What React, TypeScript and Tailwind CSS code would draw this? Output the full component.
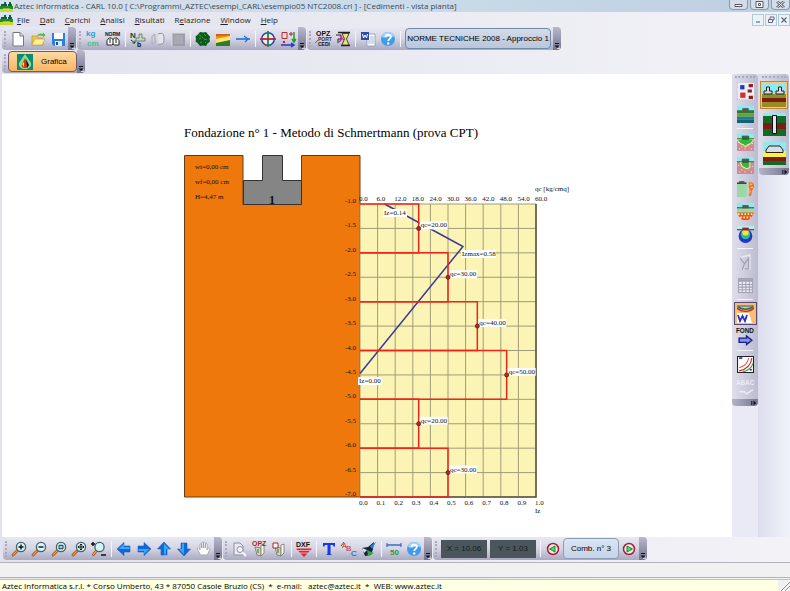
import type { ReactNode } from 'react';
import clsx from 'clsx';

// ---------- Toolbar building blocks ----------

function Icon({ children, size = 16 }: { children: ReactNode; size?: number }) {
  return (
    <svg width={size} height={size} viewBox="0 0 16 16" fill="none" className="overflow-visible" aria-hidden="true">
      {children}
    </svg>
  );
}

function ToolButton({ label, children, disabled }: { label: string; children: ReactNode; disabled?: boolean }) {
  return (
    <button type="button" aria-label={label} disabled={disabled} className="flex w-5 shrink-0 items-center justify-center">
      {children}
    </button>
  );
}

function SideButton({ label, children, selected }: { label: string; children: ReactNode; selected?: boolean }) {
  return (
    <button
      type="button"
      aria-label={label}
      className={clsx(
        'flex h-[23px] w-[23px] shrink-0 items-center justify-center',
        selected && 'border border-[#5a4a70] bg-[#f9bd74]'
      )}
    >
      {children}
    </button>
  );
}

function LayerButton({ label, children, selected }: { label: string; children: ReactNode; selected?: boolean }) {
  return (
    <button
      type="button"
      aria-label={label}
      className={clsx(
        'flex h-7 w-7 shrink-0 items-center justify-center',
        selected && 'border border-[#c8862c] bg-[#fbc67a]'
      )}
    >
      {children}
    </button>
  );
}

function Grip() {
  return (
    <div className="flex w-[6px] shrink-0 items-center justify-center">
      <div className="h-4 w-0 border-l-2 border-dotted border-[#a9a9bd]" />
    </div>
  );
}

function Divider() {
  return (
    <div className="flex w-[5px] shrink-0 items-center justify-center">
      <div className="h-4 w-px bg-[#f4f4fa]" />
    </div>
  );
}

function SideGrip() {
  return (
    <div className="flex h-[6px] w-full items-center justify-center">
      <div className="h-0 w-4/5 border-t-2 border-dotted border-[#a9a9bd]" />
    </div>
  );
}

function SideDivider() {
  return (
    <div className="flex h-[5px] items-center justify-center">
      <div className="h-px w-4 bg-[#f4f4fa]" />
    </div>
  );
}

function Overflow() {
  return (
    <button
      type="button"
      aria-label="Opzioni barra"
      className="flex w-2 shrink-0 items-end justify-center rounded-r-sm bg-gradient-to-b from-[#b9b9cc] to-[#74748f] pb-px"
    >
      <svg width="6" height="6" viewBox="0 0 6 6" aria-hidden="true">
        <path d="M1 .5h4" stroke="#111" />
        <path d="M.5 2.5h5L3 5z" fill="#111" />
        <path d="M3 5.5h3v-3" stroke="#fff" strokeWidth=".7" fill="none" />
      </svg>
    </button>
  );
}

function SideOverflow() {
  return (
    <button
      type="button"
      aria-label="Opzioni barra"
      className="flex h-[7px] w-full shrink-0 items-center justify-end rounded-b-sm bg-gradient-to-r from-[#b4b4c8] to-[#74748f] pr-px"
    >
      <svg width="6" height="6" viewBox="0 0 6 6" aria-hidden="true">
        <path d="M.8 1v4" stroke="#111" />
        <path d="M2.5 .5v5L5.2 3z" fill="#111" />
      </svg>
    </button>
  );
}

function Bar({ children }: { children: ReactNode }) {
  return (
    <div
      role="toolbar"
      className="flex h-[23px] shrink-0 rounded-sm bg-gradient-to-b from-[#e9e9f3] via-[#d5d5e3] to-[#a9a9c1]"
    >
      {children}
    </div>
  );
}

// ---------- Icons ----------

const NewIcon = () => (
  <Icon>
    <path d="M3 1.5h7l3.5 3.5v10H3z" fill="#fff" stroke="#777" />
    <path d="M10 1.5V5h3.5" fill="#ddd" stroke="#777" />
  </Icon>
);

const OpenIcon = () => (
  <Icon>
    <path d="M2 5h5l1 2h5v7H2z" fill="#e8c94c" stroke="#a98c28" strokeWidth=".6" />
    <path d="M2 14l3-6h10l-3 6z" fill="#fff0a0" stroke="#b8a040" strokeWidth=".6" />
    <path d="M7 5c1-3 4-3 6-2V1.5L15.5 4 13 6.5V5C11 4 9 4.5 7 5z" fill="#58b848" />
  </Icon>
);

const SaveIcon = () => (
  <Icon>
    <path d="M2 2h13v13H4l-2-2z" fill="#2a7fe0" />
    <path d="M4 2h9v6H4z" fill="#fff" />
    <path d="M5 10h7v5H5z" fill="#d8ecff" />
    <path d="M6 11h2v3H6z" fill="#1b4f9c" />
  </Icon>
);

const KgIcon = () => (
  <Icon>
    <text x="1" y="5" fontSize="8" fontWeight="bold" fontFamily="Liberation Sans, sans-serif" fill="#2d9be0">kg</text>
    <text x="2" y="15" fontSize="8" fontWeight="bold" fontFamily="Liberation Sans, sans-serif" fill="#45c486">cm</text>
  </Icon>
);

const NormIcon = () => (
  <Icon>
    <text x="0" y="5" fontSize="5" fontWeight="bold" fontFamily="Liberation Sans, sans-serif" fill="#111">NORM</text>
    <path d="M2 14V9.5L4 7h2.5L8 8.5 9.5 7H12l2 2.5V14H9.5L8 13l-1.500 1z" fill="#fff" stroke="#222" />
    <path d="M8 8v6M5 8v4M11 8v4" stroke="#222" />
  </Icon>
);

const LoadIcon = () => (
  <Icon>
    <path d="M6 7h3V3h3v4h3v3H6z" fill="#c9cfc9" stroke="#5b7a5b" strokeWidth=".8" />
    <text x="0" y="7" fontSize="8" fontWeight="bold" fontFamily="Liberation Sans, sans-serif" fill="#0d4d24">N</text>
    <text x="7" y="16" fontSize="7" fontWeight="bold" fontFamily="Liberation Sans, sans-serif" fill="#111">b</text>
    <path d="M1 9l4 3M5 9.5V12H2.5" stroke="#0d4d24" />
  </Icon>
);

const PileIcon = () => (
  <Icon>
    <path d="M2 5l3-2v8l-3 2z" fill="#d0d0dc" stroke="#9a9aac" strokeWidth=".7" />
    <path d="M8 3c6-2 6 1 6 5s-1 6-6 5z" fill="#e4e4ee" stroke="#8c8c9e" />
    <path d="M8 3v10" stroke="#fff" />
  </Icon>
);

const GrayBoxIcon = () => (
  <Icon>
    <path d="M2 2h13v13H2z" fill="#9d9daa" />
    <path d="M2 15V2h13" stroke="#dcdce8" />
    <path d="M4 4h9v9H4z" fill="#a9a9b5" />
  </Icon>
);

const TerrainIcon = () => (
  <Icon>
    <path d="M5 1l3 .5L11 1l2 2.5 2 2-.5 3 .5 2-2.500 2L11 15l-3-.5-3 .5-2-2.500-2.500-2L1 8 .5 5.500 3 3.500z" fill="#0c5a1c" />
    <path d="M4 4l2 1M9 3l2 2M4 8l2-1M9 8l3 1M5 12l2-1M10 12l1-1M7 5.500l1 2" stroke="#39a04a" />
  </Icon>
);

const LayersIcon = () => (
  <Icon>
    <path d="M1 3h14v4L1 8z" fill="#ef8a1d" />
    <path d="M1 3h14v1.500L1 5z" fill="#c9641a" />
    <path d="M1 8l14-3v5L1 12z" fill="#ffe96a" />
    <path d="M1 12l14-3v6H1z" fill="#2f7d2a" />
  </Icon>
);

const LineIcon = () => (
  <Icon>
    <path d="M1 8h14" stroke="#1f6fe0" strokeWidth="1.6" />
    <path d="M9 5l4 3M10 11l3-3" stroke="#1f6fe0" strokeWidth="1.2" />
  </Icon>
);

const CompassIcon = () => (
  <Icon>
    <circle cx="8" cy="8" r="6.3" stroke="#2148b8" strokeWidth="1.6" fill="#e9eefb" />
    <path d="M8 0v16" stroke="#1c8b2e" strokeWidth="1.8" />
    <path d="M0 8h16" stroke="#c8202c" strokeWidth="1.8" />
    <path d="M3 12l3 3M13 12l-3 3" stroke="#c8202c" />
  </Icon>
);

const CombIcon = () => (
  <Icon>
    <path d="M2 1.500h5v6H2z" fill="#f6d5d5" stroke="#a83232" />
    <path d="M3 10h2v2H3z" fill="#a83232" />
    <path d="M9 3h4M11 1v4" stroke="#c01818" />
    <path d="M14 1v10M12 8l2 3 1.800-3" stroke="#1f9a38" strokeWidth="1.5" />
    <path d="M1 14h13M11 12l3 2-3 2" stroke="#2438d0" strokeWidth="1.5" />
  </Icon>
);

const OptionsIcon = () => (
  <Icon>
    <text x="1" y="5" fontSize="7" fontWeight="bold" fontFamily="Liberation Sans, sans-serif" fill="#111">OPZ</text>
    <text x="3" y="10" fontSize="5" fontWeight="bold" fontFamily="Liberation Sans, sans-serif" fill="#333">PORT</text>
    <text x="3" y="15" fontSize="5" fontWeight="bold" fontFamily="Liberation Sans, sans-serif" fill="#111">CEDI</text>
    <path d="M0 12l3-3" stroke="#3a6ee0" />
  </Icon>
);

const HourglassIcon = () => (
  <Icon>
    <path d="M3 1.500h12M6 14.500h9" stroke="#222" strokeWidth="1.5" />
    <path d="M7 2.500h7L11.500 8l2.500 6H7l2.500-6z" fill="#f0e070" stroke="#222" strokeWidth=".8" />
    <path d="M1 4h5v4H3v4" stroke="#222" />
    <path d="M5 5l4 4M4 11l4-4" stroke="#d02ca8" strokeWidth="1.3" />
  </Icon>
);

const WordIcon = () => (
  <Icon>
    <path d="M7 3h8v12H7z" fill="#fdfdfd" stroke="#8d97b5" strokeWidth=".8" />
    <path d="M10 6h4M10 8h4M8 10h6M8 12h6" stroke="#9aa6c8" strokeWidth=".8" />
    <path d="M1 1h8v8H1z" fill="#2c4da8" />
    <path d="M2.500 3l1 4L5 4l1.500 3 1-4" stroke="#fff" />
  </Icon>
);

const HelpIcon = () => (
  <Icon>
    <circle cx="8" cy="8" r="7" fill="#3d9bf0" />
    <path d="M2 6a6 5 0 0112 0c-4-2-8 2-12 0z" fill="#9fd2ff" />
    <path d="M5.500 6.200C5.500 2.800 11 3 10.800 6c0 1.800-2.600 2-2.600 4" stroke="#fff" strokeWidth="1.9" />
    <circle cx="8.2" cy="12.5" r="1.2" fill="#fff" />
  </Icon>
);

const GraficaIcon = () => (
  <Icon>
    <path d="M0 0h16v16H0z" fill="#0c8c78" />
    <path d="M8 0l6 9c1 4-3 6-6 6s-7-2-6-6z" fill="#8be08a" />
    <path d="M8 4l3 6c1 3-1 4-3 4s-4-1-3-4z" fill="#d83a1e" />
    <path d="M9 5l3 6-2 3z" fill="#111" />
    <path d="M5 10l2-2v5z" fill="#ffe04a" />
  </Icon>
);

const AppIcon = () => (
  <svg width="13" height="11" viewBox="0 0 13 11" className="shrink-0" aria-hidden="true">
    <path d="M0 0h13v11H0z" fill="#cfe6ee" />
    <path d="M0 5h13v3H0z" fill="#1d8c2c" />
    <path d="M0 8h13v3H0z" fill="#c8d830" />
    <path d="M1 3h3V1h2v2h1v2H1zM8 3h1V1h2v2h1v2H8z" fill="#1b5a40" />
    <path d="M3 8h7" stroke="#f2ee4a" />
  </svg>
);

type ZoomKind = 'in' | 'out' | 'window' | 'all' | 'scale';

function MagnifierIcon({ kind }: { kind: ZoomKind }) {
  const cx = kind === 'scale' ? 8.5 : 10;
  const handle = kind === 'scale' ? 'M6 9l-3.500 4.500' : 'M6.500 9.500L2 14';
  return (
    <Icon>
      <path d={handle} stroke="#8a4b1c" strokeWidth="2.8" strokeLinecap="round" />
      <path d={handle} stroke="#f0a23e" strokeWidth="1.3" strokeLinecap="round" />
      <circle cx={cx} cy="6" r="4.6" fill="#d5f4f6" stroke="#45616e" strokeWidth="1.3" />
      {kind === 'in' && <path d="M7.500 6h5M10 3.500v5" stroke="#111" strokeWidth="1.4" />}
      {kind === 'out' && <path d="M7.500 6h5" stroke="#111" strokeWidth="1.4" />}
      {kind === 'window' && <path d="M8 4.300h4v3.500H8z" stroke="#234" fill="#8fdbe0" />}
      {kind === 'all' && (
        <path d="M7 6h6M10 3v6M7 6l1.200-1.200M7 6l1.200 1.200M13 6l-1.200-1.200M13 6l-1.200 1.200M10 3L8.800 4.200M10 3l1.200 1.200M10 9L8.800 7.800M10 9l1.200-1.200" stroke="#111" />
      )}
      {kind === 'scale' && <path d="M0 3h4M2 1v4M10 14h5" stroke="#111" strokeWidth="1.4" />}
    </Icon>
  );
}

function ArrowIcon({ turn }: { turn: number }) {
  return (
    <Icon>
      <g transform={`rotate(${turn} 8 8)`}>
        <path d="M1 8l7-6.500V5h6v6H8v3.500z" fill="#1268da" stroke="#0d4cb4" strokeWidth=".5" />
        <path d="M2.500 8L8 3v3h5.500v2z" fill="#38a8f0" />
      </g>
    </Icon>
  );
}

const HandIcon = () => (
  <Icon>
    <path
      d="M4.500 14C3 11 2 9.500 1 7.500 2 6.500 3 7.500 4 9V3.500c0-1 1.600-1 1.600 0V7 2c0-1 1.800-1 1.800 0v5V1.800c0-1 1.800-1 1.800 0V7l.4-4c.1-1 1.700-.8 1.600.2L11 9c1-2 2.500-2.500 3-1.500C13 10 12.500 12 11 14z"
      fill="#fdfdfd"
      stroke="#9c9cae"
      strokeWidth=".8"
    />
  </Icon>
);

const PageZoomIcon = () => (
  <Icon>
    <path d="M3 2h6l3 3v9H3z" fill="#e9e9f1" stroke="#9090a2" />
    <circle cx="9" cy="8.5" r="3" fill="#f8f8fc" stroke="#8c8c9e" />
    <path d="M11 11l4 4" stroke="#f8f8fc" strokeWidth="2" />
  </Icon>
);

function PaperIcon({ tag }: { tag?: string }) {
  return (
    <Icon>
      <path d="M4 6l6 1v8l-4-1z" fill="#d7d7c5" stroke="#74745e" strokeWidth=".8" />
      <path d="M10 4l3-1v9l-3 3z" fill="#f8f8ee" stroke="#74745e" strokeWidth=".8" />
      <path d="M6 9h2M6 11h2" stroke="#2f6f30" />
      {tag ? (
        <text x="1" y="5" fontSize="7" fontWeight="bold" fontFamily="Liberation Sans, sans-serif" fill="#b01c24">{tag}</text>
      ) : (
        <path d="M2 2h5v5H2z" fill="#fff" stroke="#b01c24" />
      )}
    </Icon>
  );
}

const DxfIcon = () => (
  <Icon>
    <text x="0" y="6" fontSize="7" fontWeight="bold" fontFamily="Liberation Sans, sans-serif" fill="#111">DXF</text>
    <path d="M0 7.500h16L8 16z" fill="#e0242c" />
    <path d="M2 9.500h12M4 12h8" stroke="#f0c4cc" strokeWidth=".8" />
  </Icon>
);

const TextIcon = () => (
  <Icon>
    <path d="M2 2h12v3.500h-1.500L12 4H9.500v9l1.500 1H5l1.500-1V4H4l-.5 1.500H2z" fill="#1538e8" />
  </Icon>
);

const AbcIcon = () => (
  <Icon>
    <path d="M0 5l3-4" stroke="#c8242c" />
    <text x="1" y="7" fontSize="7" fontFamily="Liberation Sans, sans-serif" fill="#c8242c">A</text>
    <text x="5" y="10" fontSize="8" fontFamily="Liberation Sans, sans-serif" fill="#b8283a">B</text>
    <text x="10" y="15" fontSize="8" fontFamily="Liberation Sans, sans-serif" fill="#2040c0">C</text>
  </Icon>
);

const PaintIcon = () => (
  <Icon>
    <path d="M1 7l6-1 6-5-1 7-2 6-6 1z" fill="#14203c" />
    <path d="M9 5l6-4-4 7z" fill="#3578e8" />
    <path d="M6 9l7 3-6 3z" fill="#30a840" />
    <path d="M1 7l5 2-3 3z" fill="#e8e8d0" />
  </Icon>
);

const ScaleIcon = () => (
  <Icon>
    <path d="M1 4h14" stroke="#2458c8" strokeWidth="1.3" />
    <path d="M1 2v4M15 2v4" stroke="#2458c8" />
    <text x="4" y="14" fontSize="8" fontWeight="bold" fontFamily="Liberation Sans, sans-serif" fill="#2f9a3c">50</text>
  </Icon>
);

function CombArrow({ left }: { left?: boolean }) {
  return (
    <Icon>
      <circle cx="8" cy="8" r="5.5" fill="#f2ece8" stroke="#a81c34" strokeWidth="1.5" />
      <path d={left ? 'M4.500 8L10 5v6z' : 'M11.500 8L6 5v6z'} fill="#58d878" stroke="#128a34" />
    </Icon>
  );
}

// Ground sections used by the vertical bar
const PointsIcon = () => (
  <Icon size={17}>
    <path d="M0 0h16v16H0z" fill="#eeeef5" />
    <path d="M.5 0v16M0 15.500h16" stroke="#b8b8c8" strokeDasharray="1 1" />
    <path d="M3 2h4v4H3z" fill="#1c38c8" />
    <path d="M11 1h4v3h-4zM10 6h4v3h-4zM11 12h4v3h-4z" fill="#8c2020" />
    <path d="M3 9h5v5H3z" fill="#d83028" />
  </Icon>
);

const StrataIcon = () => (
  <Icon size={17}>
    <path d="M0 0h16v16H0z" fill="#8cebf0" />
    <path d="M0 4h16v3H0z" fill="#2b7a28" />
    <path d="M0 7h16v3H0z" fill="#7a9a38" />
    <path d="M0 10h16v3H0z" fill="#1c8080" />
    <path d="M0 13h16v3H0z" fill="#156078" />
    <path d="M5 2h6v3H5z" fill="#555" />
  </Icon>
);

function BearingIcon({ wedge }: { wedge?: boolean }) {
  return (
    <Icon size={17}>
      <path d="M0 0h16v16H0z" fill="#8cebf0" />
      <path d="M0 4h16v12H0z" fill="#cf8c90" />
      <path d="M1 8h1M4 12h1M7 14h1M10 11h1M13 14h1M14 9h1M2 14h1" stroke="#f6d8d8" />
      <path d={wedge ? 'M3 5h9v5l-3 1-4-2z' : 'M0 5h16l-3 4-3 1-2 2-2-2-3-1z'} fill="#35b53a" stroke="#f2e8a0" />
      <path d="M5 2h6v3H5zM0 4.500h16" fill="#555" stroke="#1b6028" strokeWidth=".8" />
    </Icon>
  );
}

const DiagramIcon = () => (
  <Icon size={17}>
    <path d="M0 3h9v13H0z" fill="#9cd8a4" />
    <path d="M0 3h9" stroke="#235c2c" strokeWidth="1.5" />
    <path d="M2 1h5v2H2z" fill="#555" />
    <path d="M11 2h3l2 2v3l-2 3v2l-1 3h-2l1-5-1-4z" fill="#f07820" />
    <path d="M12 4h2M13 7h2M12 11h1" stroke="#ffe04a" />
  </Icon>
);

const ReactionIcon = () => (
  <Icon size={17}>
    <path d="M0 0h16v4H0z" fill="#8cebf0" />
    <path d="M0 4h16v6H0z" fill="#9cd8a4" />
    <path d="M0 4.500h16" stroke="#235c2c" />
    <path d="M5 2h6v3H5z" fill="#555" />
    <path d="M0 9h16l-2 4-3 3H5l-3-3z" fill="#e85a1c" />
    <path d="M1 10.500h14M3 13.500h10" stroke="#ffe9a0" strokeWidth="1.5" strokeDasharray="1.5 1.5" />
  </Icon>
);

const BulbIcon = () => (
  <Icon size={17}>
    <circle cx="8" cy="9.5" r="6.5" fill="#1c38c8" />
    <circle cx="8" cy="8" r="4.5" fill="#2bb890" />
    <circle cx="8" cy="6" r="3" fill="#f8e040" />
    <path d="M0 0h16v3.500H0z" fill="#b6eef2" />
    <path d="M0 3.500h16" stroke="#333" />
    <path d="M5 1.500h6V4H5z" fill="#a02020" />
  </Icon>
);

const SketchIcon = () => (
  <Icon size={17}>
    <path d="M4 3l8-2v13H6" stroke="#e8e8f0" strokeWidth="1.5" />
    <path d="M3 4l4 5-2 6M11 4L7 9M11 3v11H7" stroke="#9a9aac" />
  </Icon>
);

const TableIcon = () => (
  <Icon size={17}>
    <path d="M1.500 1.500h13v13h-13z" fill="#ececf4" stroke="#a2a2b4" />
    <path d="M1 2h14v2.500H1z" fill="#a2a2b4" />
    <path d="M5 4v11M8.300 4v11M11.600 4v11M1 7h14M1 9.500h14M1 12h14" stroke="#a2a2b4" />
  </Icon>
);

const SettlementIcon = () => (
  <svg width="19" height="19" viewBox="0 0 19 19" className="shrink-0" aria-hidden="true">
    <path d="M0 0h19v19H0z" fill="#f9bd74" />
    <path d="M1 1h17v2H1z" fill="#8a8a9a" />
    <path d="M1 3c5 5 12 5 17 0v2c-4 4-13 4-17 0z" fill="#c8281c" />
    <path d="M2 3c5 3 10 3 15 0" stroke="#1b7a50" strokeWidth="1.5" fill="none" />
    <path d="M1 9h12l3 10H1z" fill="#fff" />
    <path d="M2 11l2 6 2.500-5L9 17l2-6" stroke="#2430d0" strokeWidth="1.8" fill="none" />
  </svg>
);

const FondIcon = () => (
  <Icon size={17}>
    <text x="-1" y="5" fontSize="6" fontWeight="bold" fontFamily="Liberation Sans, sans-serif" fill="#111">FOND</text>
    <path d="M2 9.500h7V7.500l5 4-5 4v-2H2z" fill="#8c90e0" stroke="#14208c" strokeWidth="1.3" />
  </Icon>
);

const CurvesIcon = () => (
  <Icon size={17}>
    <path d="M.5.5h15v15H.5z" fill="#fff" stroke="#222" />
    <path d="M2 14c6-1 11-5 12-12" stroke="#c82424" />
    <path d="M2 11c4-1 8-4 9-9" stroke="#e06060" />
    <path d="M5 15c5-1 9-4 10-8" stroke="#2f9a3c" />
    <path d="M2 2h3M12 13h2" stroke="#1c38c8" strokeWidth="1.5" />
  </Icon>
);

const AbacIcon = () => (
  <Icon size={17}>
    <text x="-1" y="6" fontSize="6" fontWeight="bold" fontFamily="Liberation Sans, sans-serif" fill="#ececf4">ABAC</text>
    <path d="M2 12h5l2 2 6-4" stroke="#ececf4" strokeWidth="1.3" />
  </Icon>
);

const FoundationLayer = () => (
  <svg width="24" height="24" viewBox="0 0 24 24" className="shrink-0" aria-hidden="true">
    <path d="M0 0h24v12H0z" fill="#8cebf0" />
    <path d="M0 11h24v5H0z" fill="#8a9028" />
    <path d="M0 15h24v4H0z" fill="#7c1c14" />
    <path d="M0 19h24v5H0z" fill="#9a8c24" />
    <path d="M2 11V8h2.500V4h3v4H10v3zM14 11V8h2.500V4h3v4H22v3z" fill="#dcdce4" stroke="#222" />
  </svg>
);

const PileLayer = () => (
  <svg width="23" height="23" viewBox="0 0 23 23" aria-hidden="true">
    <path d="M0 0h23v23H0z" fill="#136a24" />
    <path d="M0 0h23v3H0z" fill="#8cebf0" />
    <path d="M0 10h23v6H0z" fill="#7c1c14" />
    <path d="M9.500 2.500h4v18h-4z" fill="#e4e4ec" stroke="#111" />
  </svg>
);

const SlabLayer = () => (
  <svg width="23" height="23" viewBox="0 0 23 23" aria-hidden="true">
    <path d="M0 0h23v10H0z" fill="#8cebf0" />
    <path d="M0 9h23v6H0z" fill="#fdf43a" />
    <path d="M0 15h23v4H0z" fill="#7c1c14" />
    <path d="M0 19h23v4H0z" fill="#136a24" />
    <path d="M3 10.500V8l3-4h11l3 4v2.500z" fill="#dcdce4" stroke="#222" />
  </svg>
);

// ---------- Schmertmann chart ----------

const PLOT_LEFT = 176;
const PLOT_TOP = 54;
const PLOT_WIDTH = 176;
const PLOT_HEIGHT = 293;

const depthY = (depth: number) => PLOT_TOP + ((depth - 1) / 6) * PLOT_HEIGHT;
const qcX = (qc: number) => PLOT_LEFT + (qc / 60) * PLOT_WIDTH;
const izX = (iz: number) => PLOT_LEFT + iz * PLOT_WIDTH;

const qcLayers = [
  { from: 1, to: 2, qc: 20 },
  { from: 2, to: 3, qc: 30 },
  { from: 3, to: 4, qc: 40 },
  { from: 4, to: 5, qc: 50 },
  { from: 5, to: 6, qc: 20 },
  { from: 6, to: 7, qc: 30 }
];

const steps = Array.from({ length: 11 }, (_, i) => i);
const depths = Array.from({ length: 13 }, (_, i) => 1 + i * 0.5);

function Tag({ x, y, width, children }: { x: number; y: number; width: number; children: ReactNode }) {
  return (
    <g>
      <rect x={x} y={y - 6} width={width} height="8" fill="#fff" />
      <text x={x + 1} y={y}>{children}</text>
    </g>
  );
}

function SettlementChart() {
  return (
    <svg
      width="390"
      height="366"
      viewBox="0 0 390 366"
      role="img"
      aria-label="Diagramma qc e Iz"
      fontFamily="Liberation Serif, serif"
      fontSize="7"
      fill="#111"
    >
      {/* Soil and foundation */}
      <path d="M.5 5.500h58.500V54.500h58.500V5.500H176V347H.5z" fill="#ef780c" stroke="#6b3a10" />
      <path d="M59.500 54.500v-24h19v-25h20v25h19v24z" fill="#858585" stroke="#333" />
      <text x="11" y="19">wi=0,00 cm</text>
      <text x="11" y="34">wf=0,00 cm</text>
      <text x="11" y="49">H=4,47 m</text>
      <text x="85" y="54" fontSize="12" fontWeight="bold">1</text>

      {/* Grid */}
      <rect x={PLOT_LEFT} y={PLOT_TOP} width={PLOT_WIDTH} height={PLOT_HEIGHT} fill="#fbf4b4" />
      <g stroke="#a09c78" strokeWidth="1">
        {steps.map((i) => (
          <line key={i} x1={izX(i / 10)} x2={izX(i / 10)} y1={PLOT_TOP} y2={PLOT_TOP + PLOT_HEIGHT} />
        ))}
        {depths.map((d) => (
          <line key={d} x1={PLOT_LEFT} x2={PLOT_LEFT + PLOT_WIDTH} y1={depthY(d)} y2={depthY(d)} />
        ))}
      </g>
      <path d="M352 54v293H176" fill="none" stroke="#55523c" strokeWidth="1.5" />

      {/* Axis labels */}
      {steps.map((i) => (
        <g key={i}>
          <text x={izX(i / 10) - 1} y="51">{(i * 6).toFixed(1)}</text>
          <text x={izX(i / 10) - 1} y="355">{(i / 10).toFixed(1)}</text>
        </g>
      ))}
      {depths.map((d) => (
        <text key={d} x="172" y={depthY(d) - 1} textAnchor="end">{`-${d.toFixed(1)}`}</text>
      ))}
      <text x="351" y="41">qc [kg/cmq]</text>
      <text x="351" y="363">Iz</text>

      {/* Influence line */}
      <polyline
        points={`${izX(0.14)},${depthY(1)} ${izX(0.585)},${depthY(1.87)} ${izX(0)},${depthY(4.47)}`}
        fill="none"
        stroke="#3a3a96"
        strokeWidth="1.5"
      />

      {/* qc profile */}
      {qcLayers.map((l) => (
        <path
          key={l.from}
          d={`M${PLOT_LEFT} ${depthY(l.from)}H${qcX(l.qc)}V${depthY(l.to)}H${PLOT_LEFT}`}
          fill="none"
          stroke="#f02418"
          strokeWidth="1.5"
        />
      ))}

      <Tag x={199} y={65} width={24}>Iz=0.14</Tag>
      <Tag x={277} y={106} width={35}>Izmax=0.58</Tag>
      <Tag x={174} y={233} width={24}>Iz=0.00</Tag>
      {qcLayers.map((l) => {
        const x = qcX(l.qc);
        const y = depthY((l.from + l.to) / 2);
        return (
          <g key={l.from}>
            <Tag x={x + 1} y={y - 1} width={28}>{`qc=${l.qc.toFixed(2)}`}</Tag>
            <circle cx={x} cy={y} r="2" fill="#b03020" stroke="#5a1010" strokeWidth=".8" />
          </g>
        );
      })}
    </svg>
  );
}

// ---------- Page ----------

const menu = ['File', 'Dati', 'Carichi', 'Analisi', 'Risultati', 'Relazione', 'Window', 'Help'];

const captionButton = 'flex h-[10px] w-[19px] items-center justify-center rounded-b-sm border border-t-0 border-[#8d9aac] bg-[#d3deea]';
const childButton = 'flex h-3 w-3 items-center justify-center border border-[#b4c8d6] bg-[#e9f3f9]';

export default function App() {
  return (
    <div className="flex min-h-screen flex-col bg-gradient-to-r from-[#e2e2ee] to-[#f2f2f7] font-['Open_Sans',sans-serif] text-[8px] text-[#222]">
      {/* Title bar */}
      <header className="flex h-3 items-center justify-between bg-gradient-to-r from-[#d5dfea] via-[#cbdbe9] to-[#bccfe2] text-[#3c4654]">
        <div className="flex min-w-0 items-center gap-px whitespace-nowrap">
          <AppIcon />
          <h1>Aztec Informatica - CARL 10.0 [ C:\Programmi_AZTEC\esempi_CARL\esempio05 NTC2008.crl ] - [Cedimenti - vista pianta]</h1>
        </div>
        <div className="flex gap-[2px] self-start">
          <button type="button" aria-label="Riduci" className={captionButton}>
            <svg width="9" height="6" viewBox="0 0 9 6" fill="#fff"><path d="M1 2.500h7v2H1z" stroke="#556" /></svg>
          </button>
          <button type="button" aria-label="Ingrandisci" className={captionButton}>
            <svg width="9" height="7" viewBox="0 0 9 7" fill="#fff"><path d="M1 .5h7v6H1zM3.500 2.500h2v2h-2z" stroke="#556" /></svg>
          </button>
          <button type="button" aria-label="Chiudi" className={captionButton}>
            <svg width="9" height="7" viewBox="0 0 9 7"><path d="M1 .5l7 6M8 .5l-7 6" stroke="#556" strokeWidth="2.5" /><path d="M1 .5l7 6M8 .5l-7 6" stroke="#fff" /></svg>
          </button>
        </div>
      </header>

      {/* Menu bar */}
      <nav className="flex h-[15px] items-center justify-between">
        <div className="flex items-center">
          <AppIcon />
          <ul className="flex gap-[10px] pl-1">
            {menu.map((item) => {
              // Relazione uses its second letter as access key
              const key = item === 'Relazione' ? 1 : 0;
              return (
                <li key={item}>
                  <button type="button" className="block leading-[14px]">
                    {item.slice(0, key)}
                    <span className="underline">{item[key]}</span>
                    {item.slice(key + 1)}
                  </button>
                </li>
              );
            })}
          </ul>
        </div>
        <div className="flex gap-px">
          <button type="button" aria-label="Riduci vista" className={childButton}>
            <svg width="8" height="8" viewBox="0 0 8 8"><path d="M2 6h4" stroke="#556" /></svg>
          </button>
          <button type="button" aria-label="Ripristina vista" className={childButton}>
            <svg width="8" height="8" viewBox="0 0 8 8" fill="none"><path d="M3 3V1h4v3H5M1.500 3.500h4v3h-4z" stroke="#667" /></svg>
          </button>
          <button type="button" aria-label="Chiudi vista" className={childButton}>
            <svg width="8" height="8" viewBox="0 0 8 8"><path d="M1.500 1.500l5 5M6.500 1.500l-5 5" stroke="#667" strokeWidth="1.2" /></svg>
          </button>
        </div>
      </nav>

      {/* Main toolbar */}
      <div className="flex gap-px pl-[2px]">
        <Bar>
          <Grip />
          <ToolButton label="Nuovo"><NewIcon /></ToolButton>
          <ToolButton label="Apri"><OpenIcon /></ToolButton>
          <ToolButton label="Salva"><SaveIcon /></ToolButton>
          <Overflow />
        </Bar>
        <Bar>
          <Grip />
          <ToolButton label="Unità di misura"><KgIcon /></ToolButton>
          <ToolButton label="Normativa"><NormIcon /></ToolButton>
          <Divider />
          <ToolButton label="Carichi fondazione"><LoadIcon /></ToolButton>
          <ToolButton label="Pali" disabled><PileIcon /></ToolButton>
          <ToolButton label="Piastra" disabled><GrayBoxIcon /></ToolButton>
          <Divider />
          <ToolButton label="Terreni"><TerrainIcon /></ToolButton>
          <ToolButton label="Stratigrafia"><LayersIcon /></ToolButton>
          <ToolButton label="Falda"><LineIcon /></ToolButton>
          <Divider />
          <ToolButton label="Carichi"><CompassIcon /></ToolButton>
          <ToolButton label="Combinazioni"><CombIcon /></ToolButton>
          <Overflow />
        </Bar>
        <Bar>
          <Grip />
          <ToolButton label="Opzioni portanza e cedimenti"><OptionsIcon /></ToolButton>
          <ToolButton label="Analisi"><HourglassIcon /></ToolButton>
          <Divider />
          <ToolButton label="Relazione"><WordIcon /></ToolButton>
          <ToolButton label="Guida"><HelpIcon /></ToolButton>
          <Divider />
          <button
            type="button"
            className="mx-[2px] my-px w-[146px] whitespace-nowrap rounded-sm border border-[#7488a8] bg-gradient-to-b from-[#d3dcea] to-[#b9c6dc] font-['Liberation_Sans',sans-serif] text-black"
          >
            NORME TECNICHE 2008 - Approccio 1
          </button>
          <Overflow />
        </Bar>
      </div>

      {/* View toolbar */}
      <div className="flex pb-px pl-[2px]">
        <Bar>
          <Grip />
          <button
            type="button"
            className="my-px flex w-[69px] items-center gap-2 rounded-sm border border-[#6d5a6a] bg-gradient-to-b from-[#fcd9a0] to-[#fbb560] pl-2 font-['Liberation_Sans',sans-serif] text-black"
          >
            <GraficaIcon />
            Grafica
          </button>
          <Overflow />
        </Bar>
      </div>

      {/* Drawing area with the vertical bars on its right */}
      <div className="flex flex-1 pl-[2px]">
        <main className="flex-1 bg-white pl-[182px] pt-[50px]">
          <h2 className="mb-[9px] font-['Liberation_Serif',serif] text-[13px] leading-[17px] text-black">
            Fondazione n° 1 - Metodo di Schmertmann (prova CPT)
          </h2>
          <SettlementChart />
        </main>
        <aside className="flex w-[26px] flex-col bg-[#eaeaf6]">
          <div role="toolbar" className="flex flex-col items-center rounded-sm bg-gradient-to-r from-[#dedeeb] to-[#bcbcd0]">
            <SideGrip />
            <SideButton label="Punti"><PointsIcon /></SideButton>
            <SideButton label="Stratigrafia terreno"><StrataIcon /></SideButton>
            <SideDivider />
            <SideButton label="Carico limite"><BearingIcon /></SideButton>
            <SideButton label="Scorrimento"><BearingIcon wedge /></SideButton>
            <SideButton label="Pressioni"><DiagramIcon /></SideButton>
            <SideButton label="Reazioni"><ReactionIcon /></SideButton>
            <SideButton label="Bulbo delle tensioni"><BulbIcon /></SideButton>
            <SideDivider />
            <SideButton label="Sollecitazioni"><SketchIcon /></SideButton>
            <SideButton label="Tabella"><TableIcon /></SideButton>
            <SideDivider />
            <SideButton label="Cedimenti" selected><SettlementIcon /></SideButton>
            <SideButton label="Fondazione"><FondIcon /></SideButton>
            <SideDivider />
            <SideButton label="Curve"><CurvesIcon /></SideButton>
            <SideButton label="Abachi"><AbacIcon /></SideButton>
            <SideOverflow />
          </div>
        </aside>
        <aside className="flex w-8 flex-col bg-gradient-to-r from-[#dcdeee] to-[#f0f2fb] px-px">
          <div role="toolbar" className="flex flex-col items-center gap-px rounded-sm bg-gradient-to-r from-[#dedeeb] to-[#bcbcd0]">
            <SideGrip />
            <LayerButton label="Fondazioni" selected><FoundationLayer /></LayerButton>
            <LayerButton label="Palo"><PileLayer /></LayerButton>
            <LayerButton label="Platea"><SlabLayer /></LayerButton>
            <SideOverflow />
          </div>
        </aside>
      </div>

      {/* View controls */}
      <div className="flex gap-px pb-[2px] pl-[3px]">
        <Bar>
          <Grip />
          <ToolButton label="Zoom avanti"><MagnifierIcon kind="in" /></ToolButton>
          <ToolButton label="Zoom indietro"><MagnifierIcon kind="out" /></ToolButton>
          <ToolButton label="Zoom finestra"><MagnifierIcon kind="window" /></ToolButton>
          <ToolButton label="Zoom tutto"><MagnifierIcon kind="all" /></ToolButton>
          <ToolButton label="Zoom scala"><MagnifierIcon kind="scale" /></ToolButton>
          <Divider />
          <ToolButton label="Sinistra"><ArrowIcon turn={0} /></ToolButton>
          <ToolButton label="Destra"><ArrowIcon turn={180} /></ToolButton>
          <ToolButton label="Su"><ArrowIcon turn={90} /></ToolButton>
          <ToolButton label="Giù"><ArrowIcon turn={270} /></ToolButton>
          <ToolButton label="Sposta"><HandIcon /></ToolButton>
          <Overflow />
        </Bar>
        <Bar>
          <Grip />
          <ToolButton label="Anteprima" disabled><PageZoomIcon /></ToolButton>
          <ToolButton label="Opzioni disegno"><PaperIcon tag="OPZ" /></ToolButton>
          <ToolButton label="Imposta pagina"><PaperIcon /></ToolButton>
          <Divider />
          <ToolButton label="Esporta DXF"><DxfIcon /></ToolButton>
          <Divider />
          <ToolButton label="Testo"><TextIcon /></ToolButton>
          <ToolButton label="Font"><AbcIcon /></ToolButton>
          <ToolButton label="Colori"><PaintIcon /></ToolButton>
          <Divider />
          <ToolButton label="Quote"><ScaleIcon /></ToolButton>
          <ToolButton label="Guida disegno"><HelpIcon /></ToolButton>
          <Overflow />
        </Bar>
        <Bar>
          <Grip />
          <div className="flex items-center gap-[3px] px-[2px] font-['Liberation_Sans',sans-serif]">
            <output className="flex h-[18px] w-[46px] items-center justify-center whitespace-nowrap bg-[#4b565c] text-[#141a1e]">X = 10.06</output>
            <output className="flex h-[18px] w-[46px] items-center justify-center whitespace-nowrap bg-[#4b565c] text-[#141a1e]">Y = 1.03</output>
          </div>
          <Divider />
          <ToolButton label="Combinazione precedente"><CombArrow left /></ToolButton>
          <button
            type="button"
            className="my-px w-14 whitespace-nowrap rounded-sm border border-[#8c9cb8] bg-gradient-to-b from-[#dbe4f2] to-[#c6d3e8] font-['Liberation_Sans',sans-serif] text-black"
          >
            Comb. n° 3
          </button>
          <ToolButton label="Combinazione successiva"><CombArrow /></ToolButton>
          <Overflow />
        </Bar>
      </div>

      <div className="h-4 border-y border-[#b4b4b8] bg-[#f1f1f1]" />

      {/* Status bar */}
      <footer className="mt-px flex h-3 items-center justify-between border-t border-[#c4c4b8] bg-[#ffffe1] text-black">
        <p className="whitespace-pre pl-[2px]">
          Aztec Informatica s.r.l. * Corso Umberto, 43 * 87050 Casole Bruzio (CS)  *  e-mail:   aztec@aztec.it  *  WEB: www.aztec.it
        </p>
        <div className="flex h-full w-3 items-end bg-[#f1f1f1]">
          <svg width="12" height="11" viewBox="0 0 12 11" aria-hidden="true">
            <path d="M3 11l9-9M7 11l5-5" stroke="#999" />
          </svg>
        </div>
      </footer>
    </div>
  );
}
